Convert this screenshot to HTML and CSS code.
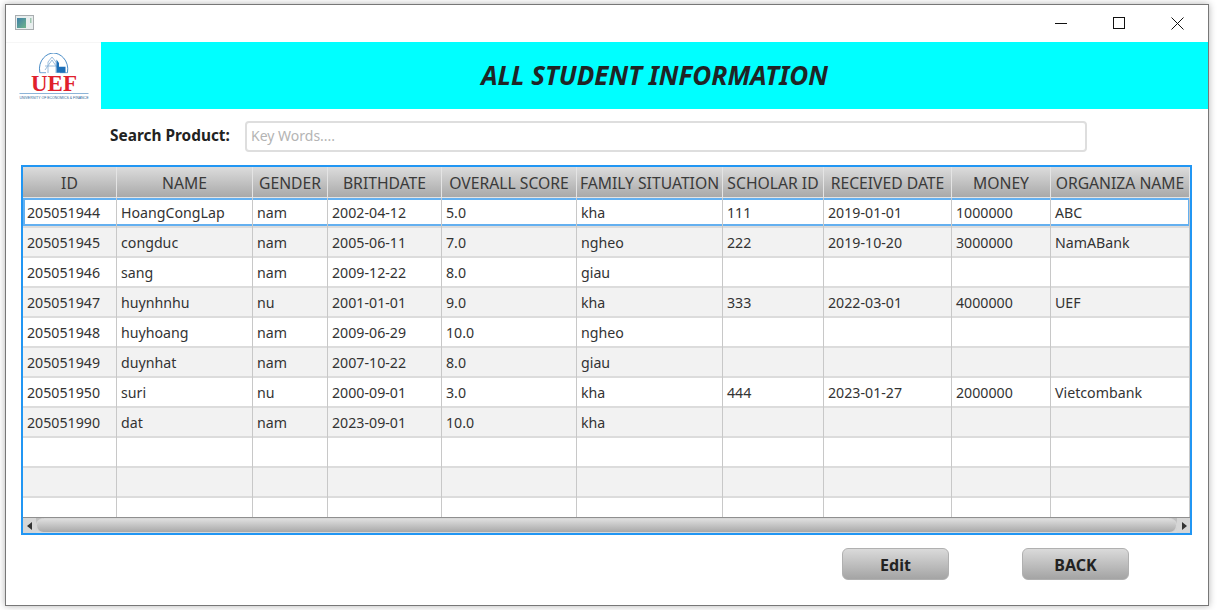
FILE: index.html
```html
<!DOCTYPE html>
<html lang="en">
<head>
<meta charset="utf-8">
<title>All Student Information</title>
<link rel="stylesheet" href="styles.css">
</head>
<body>
<div class="window">
  <div class="titlebar">
    <svg class="app-icon" width="20" height="16" viewBox="0 0 20 16">
      <defs><linearGradient id="ai" x1="0" y1="0" x2="1" y2="1"><stop offset="0" stop-color="#3f7fa8"/><stop offset="1" stop-color="#6fb58a"/></linearGradient></defs>
      <rect x="0.5" y="0.5" width="18" height="14" fill="#e8eeee" stroke="#a9adb0"/>
      <rect x="2" y="3" width="9" height="10" fill="url(#ai)"/>
      <rect x="15" y="3" width="1.5" height="5" fill="#9fc6b0"/>
    </svg>
    <div class="controls">
      <svg width="13" height="13" viewBox="0 0 13 13"><path d="M0 6.5H12" stroke="#111" fill="none"/></svg>
      <svg width="13" height="13" viewBox="0 0 13 13"><rect x="0.5" y="0.5" width="11" height="11" stroke="#111" fill="none"/></svg>
      <svg width="13" height="13" viewBox="0 0 13 13"><path d="M0.5 0.5L12.5 12.5M12.5 0.5L0.5 12.5" stroke="#111" fill="none"/></svg>
    </div>
  </div>

  <header class="banner">
    <div class="logo">
      <svg width="72" height="48" viewBox="0 0 72 48">
        <path d="M21.8 19.7C19.5 7 29 0 35.5 0C42 0 51.5 7 49.5 19.7" fill="none" stroke="#1c6fb8" stroke-width="0.8"/>
        <path d="M21.8 19.7H28M42 19.7H49.5" stroke="#1c6fb8" stroke-width="0.6"/>
        <path d="M30 20V9L34 4L38 9V20M27 13H40M27 17L34 7L40 16" fill="none" stroke="#8fb4d8" stroke-width="0.9"/>
        <path d="M38.5 6.5L41 10V13.7H47.5V19.7H38.5Z" fill="#1c6fb8"/>
        <text class="logo-uef" x="36" y="38" text-anchor="middle">UEF</text>
        <path d="M1.5 40.5H70.5" stroke="#5b93c7" stroke-width="0.7"/>
        <text class="logo-sub" x="36" y="46" text-anchor="middle">UNIVERSITY OF ECONOMICS &amp; FINANCE</text>
      </svg>
    </div>
    <div class="banner-title"><h1>ALL STUDENT INFORMATION</h1></div>
  </header>

  <div class="search">
    <label class="search-label" for="kw">Search Product:</label>
    <input class="search-input" id="kw" type="text" placeholder="Key Words....">
  </div>

  <div class="table">
    <div class="row head">
      <div>ID</div><div>NAME</div><div>GENDER</div><div>BRITHDATE</div><div>OVERALL SCORE</div><div>FAMILY SITUATION</div><div>SCHOLAR ID</div><div>RECEIVED DATE</div><div>MONEY</div><div>ORGANIZA NAME</div>
    </div>
    <div class="body">
      <div class="row selected"><div>205051944</div><div>HoangCongLap</div><div>nam</div><div>2002-04-12</div><div>5.0</div><div>kha</div><div>111</div><div>2019-01-01</div><div>1000000</div><div>ABC</div></div>
      <div class="row"><div>205051945</div><div>congduc</div><div>nam</div><div>2005-06-11</div><div>7.0</div><div>ngheo</div><div>222</div><div>2019-10-20</div><div>3000000</div><div>NamABank</div></div>
      <div class="row"><div>205051946</div><div>sang</div><div>nam</div><div>2009-12-22</div><div>8.0</div><div>giau</div><div></div><div></div><div></div><div></div></div>
      <div class="row"><div>205051947</div><div>huynhnhu</div><div>nu</div><div>2001-01-01</div><div>9.0</div><div>kha</div><div>333</div><div>2022-03-01</div><div>4000000</div><div>UEF</div></div>
      <div class="row"><div>205051948</div><div>huyhoang</div><div>nam</div><div>2009-06-29</div><div>10.0</div><div>ngheo</div><div></div><div></div><div></div><div></div></div>
      <div class="row"><div>205051949</div><div>duynhat</div><div>nam</div><div>2007-10-22</div><div>8.0</div><div>giau</div><div></div><div></div><div></div><div></div></div>
      <div class="row"><div>205051950</div><div>suri</div><div>nu</div><div>2000-09-01</div><div>3.0</div><div>kha</div><div>444</div><div>2023-01-27</div><div>2000000</div><div>Vietcombank</div></div>
      <div class="row"><div>205051990</div><div>dat</div><div>nam</div><div>2023-09-01</div><div>10.0</div><div>kha</div><div></div><div></div><div></div><div></div></div>
      <div class="row"><div></div><div></div><div></div><div></div><div></div><div></div><div></div><div></div><div></div><div></div></div>
      <div class="row"><div></div><div></div><div></div><div></div><div></div><div></div><div></div><div></div><div></div><div></div></div>
      <div class="row"><div></div><div></div><div></div><div></div><div></div><div></div><div></div><div></div><div></div><div></div></div>
    </div>
    <div class="scrollbar">
      <div class="arrow"><svg width="6" height="8" viewBox="0 0 6 8"><path d="M5 0V8L0 4Z" fill="#333"/></svg></div>
      <div class="thumb"></div>
      <div class="arrow"><svg width="6" height="8" viewBox="0 0 6 8"><path d="M1 0V8L6 4Z" fill="#333"/></svg></div>
    </div>
  </div>

  <div class="actions">
    <button class="btn" type="button">Edit</button>
    <button class="btn" type="button">BACK</button>
  </div>
</div>
</body>
</html>
```
FILE: styles.css
```css
* { box-sizing: border-box; }
html, body { margin: 0; height: 100%; overflow: hidden; background: #fff; }
body { padding: 4px 0 0 5px; font-family: "Noto Sans", "Open Sans", sans-serif; color: #333; }

.window {
  width: 1204px;
  height: 602px;
  background: #fff;
  border: 1px solid #777;
  box-shadow: 0 0 7px rgba(0,0,0,.3);
  display: flex;
  flex-direction: column;
}

.titlebar {
  height: 37px;
  flex: none;
  display: flex;
  align-items: center;
  justify-content: space-between;
  padding: 0 24px 1px 9px;
}
.app-icon { display: block; }
.controls { display: flex; gap: 45px; align-items: center; }
.controls svg { display: block; }

.banner { height: 67px; flex: none; display: flex; }
.logo {
  width: 95px;
  flex: none;
  display: flex;
  align-items: flex-start;
  justify-content: center;
  padding-top: 10px;
  border-top: 1px solid #f6f6f6;
}
.logo svg { display: block; }
.logo-uef { font: 700 23px "Liberation Serif", serif; fill: #e0202c; }
.logo-sub { font: 400 3.5px "Liberation Sans", sans-serif; fill: #2a5f95; }

.banner-title {
  flex: 1;
  background: #0ff;
  display: flex;
  align-items: center;
  justify-content: center;
  padding-bottom: 2px;
}
.banner-title h1 {
  margin: 0;
  font: italic 700 26px "Noto Sans", sans-serif;
  color: #1f2526;
}

.search {
  height: 56px;
  flex: none;
  display: flex;
  align-items: flex-start;
  padding: 12px 0 0 104px;
}
.search-label { font-size: 15.4px; font-weight: 700; color: #222; width: 135px; line-height: 30px; }
.search-input {
  width: 842px;
  height: 31px;
  border: 2px solid #dedede;
  border-radius: 4px;
  padding: 0 4px 2px;
  font: 14px "Noto Sans", sans-serif;
  background: #fff;
}
.search-input::placeholder { color: #b4b4b4; opacity: 1; }

.table {
  margin-left: 15px;
  width: 1171px;
  height: 370px;
  flex: none;
  border: 2px solid #2196f3;
  display: flex;
  flex-direction: column;
  font-size: 14.2px;
}

.row {
  display: grid;
  grid-template-columns: 94px 136px 75px 114px 135px 146px 101px 128px 99px 139px;
  height: 30px;
  background: #fff;
  border-bottom: 2px solid #dcdcdc;
}
.row > div {
  padding-left: 4px;
  line-height: 30px;
  height: 30px;
  border-right: 1px solid #c8c8c8;
  white-space: nowrap;
  overflow: hidden;
}
.body { height: 319px; flex: none; overflow: hidden; }
.body .row:nth-child(even) { background: #f2f2f2; }

.row.selected { box-shadow: inset 0 0 0 2px #64b0f0; }

.row.head {
  height: 31px;
  flex: none;
  border-bottom: 0;
  background: #fff;
  font-size: 15.7px;
}
.row.head > div {
  height: 31px;
  line-height: 33px;
  padding: 0;
  text-align: center;
  background: linear-gradient(#dcdcdc, #a9a9a9);
  border-right: 1px solid #e4e4e4;
  border-bottom: 1px solid #e4e4e4;
  color: #3a3a3a;
}

.scrollbar {
  height: 16px;
  flex: none;
  display: flex;
  background: linear-gradient(#bdbdbd, #dadada);
  border-top: 1px solid #8f8f8f;
}
.arrow { width: 13px; flex: none; display: flex; align-items: center; justify-content: center; background: #d6d6d6; }
.thumb {
  flex: 1;
  border-radius: 8px;
  background: linear-gradient(#dedede, #a9a9a9);
  border: 1px solid #d8d8d8;
}

.actions {
  display: flex;
  gap: 73px;
  padding: 13px 0 0 836px;
}
.btn {
  width: 107px;
  height: 32px;
  border: 1px solid #b0b0b0;
  border-radius: 6px;
  background: linear-gradient(#dadada, #a4a4a4);
  font: 700 16px "Noto Sans", sans-serif;
  color: #222;
  padding: 2px 0 0;
}
```
